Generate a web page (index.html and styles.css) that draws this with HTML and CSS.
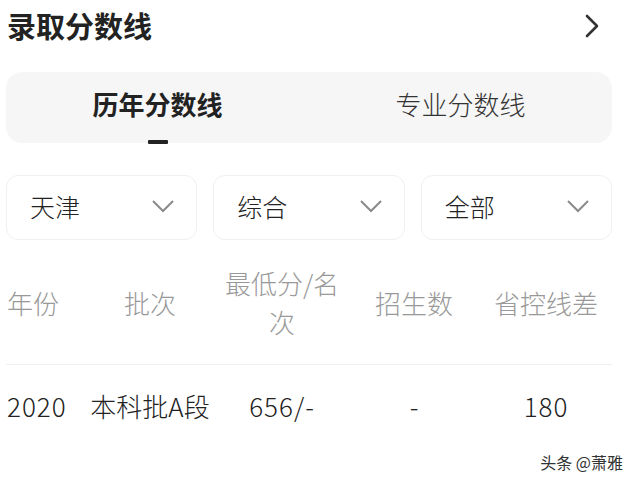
FILE: index.html
```html
<html>
<head>
<title>录取分数线</title>
<meta charset='utf-8'/>
<link rel="stylesheet" href="styles.css">
</head>
<body>
<div id='score'>
<div class='head'>
<h2>录取分数线</h2>
<svg class='more' width='16' height='26' viewBox='0 0 16 26'><path d='M3 3 L13 13 L3 23' fill='none' stroke='#333' stroke-width='2.6' stroke-linecap='round' stroke-linejoin='round'/></svg>
</div>
<div class='tabs'>
<div class='tab active'><span>历年分数线</span><i class='bar'></i></div>
<div class='tab'><span>专业分数线</span><i class='bar'></i></div>
</div>
<div class='pickers'>
<div class='pick'><span>天津</span><svg width='24' height='14' viewBox='0 0 24 14'><path d='M2 2 L12 12 L22 2' fill='none' stroke='#8a8a8a' stroke-width='2'/></svg></div>
<div class='pick'><span>综合</span><svg width='24' height='14' viewBox='0 0 24 14'><path d='M2 2 L12 12 L22 2' fill='none' stroke='#8a8a8a' stroke-width='2'/></svg></div>
<div class='pick'><span>全部</span><svg width='24' height='14' viewBox='0 0 24 14'><path d='M2 2 L12 12 L22 2' fill='none' stroke='#8a8a8a' stroke-width='2'/></svg></div>
</div>
<div class='row thead'>
<div class='c1'>年份</div>
<div>批次</div>
<div>最低分/名次</div>
<div>招生数</div>
<div>省控线差</div>
</div>
<div class='row tbody'>
<div class='c1 num'>2020</div>
<div>本科批A段</div>
<div class='num'>656/-</div>
<div>-</div>
<div class='num'>180</div>
</div>
</div>
<div class='mark'>头条 @萧雅</div>
</body>
</html>
```

FILE: styles.css
```css
body {
	margin: 0;
	background: #fff;
	color: #222;
	font-family: "Noto Sans CJK SC", "Noto Sans", sans-serif;
	font-weight: 300;
}
#score {
	padding: 0 28px 0 6px;
}
.head {
	display: flex;
	justify-content: space-between;
	align-items: center;
	height: 52px;
	padding: 0 12px 0 1px;
}
h2 {
	margin: 0 0 2px 0;
	font-size: 29px;
	font-weight: bold;
	color: #222;
}
.tabs {
	margin-top: 20px;
	height: 71px;
	background: #f6f6f6;
	border-radius: 16px;
	display: grid;
	grid-template-columns: 1fr 1fr;
}
.tab {
	display: flex;
	flex-direction: column;
	align-items: center;
	padding-top: 13px;
	font-size: 26px;
	color: #333;
}
.tab span {
	line-height: 38px;
}
.tab .bar {
	display: block;
	margin-top: 17px;
	width: 20px;
	height: 4px;
	border-radius: 1px;
}
.tab.active {
	font-weight: bold;
	color: #222;
}
.tab.active .bar {
	background: #222;
}
.pickers {
	margin-top: 32px;
	display: grid;
	grid-template-columns: 1fr 1fr 1fr;
	column-gap: 16px;
}
.pick {
	border: 1px solid #f0f0f0;
	border-radius: 12px;
	display: flex;
	align-items: center;
	justify-content: space-between;
	padding: 0 21px 4px 23px;
	box-sizing: border-box;
	height: 65px;
	font-size: 25px;
	color: #222;
}
.row {
	display: grid;
	grid-template-columns: 71px 120px 120px 120px 120px;
	column-gap: 12px;
	align-items: center;
	padding-left: 1px;
	height: 84px;
	font-size: 26px;
	text-align: center;
}
.row .c1 {
	text-align: left;
}
.thead {
	height: 124px;
	border-bottom: 1px solid #f0f0f0;
	color: #999;
	line-height: 39px;
}
.tbody {
	padding-bottom: 4px;
	box-sizing: border-box;
	white-space: nowrap;
}
.tbody .num {
	letter-spacing: 1px;
}
.mark {
	position: absolute;
	right: 17px;
	bottom: 10px;
	font-size: 16px;
	font-weight: normal;
	color: #333;
}
```
